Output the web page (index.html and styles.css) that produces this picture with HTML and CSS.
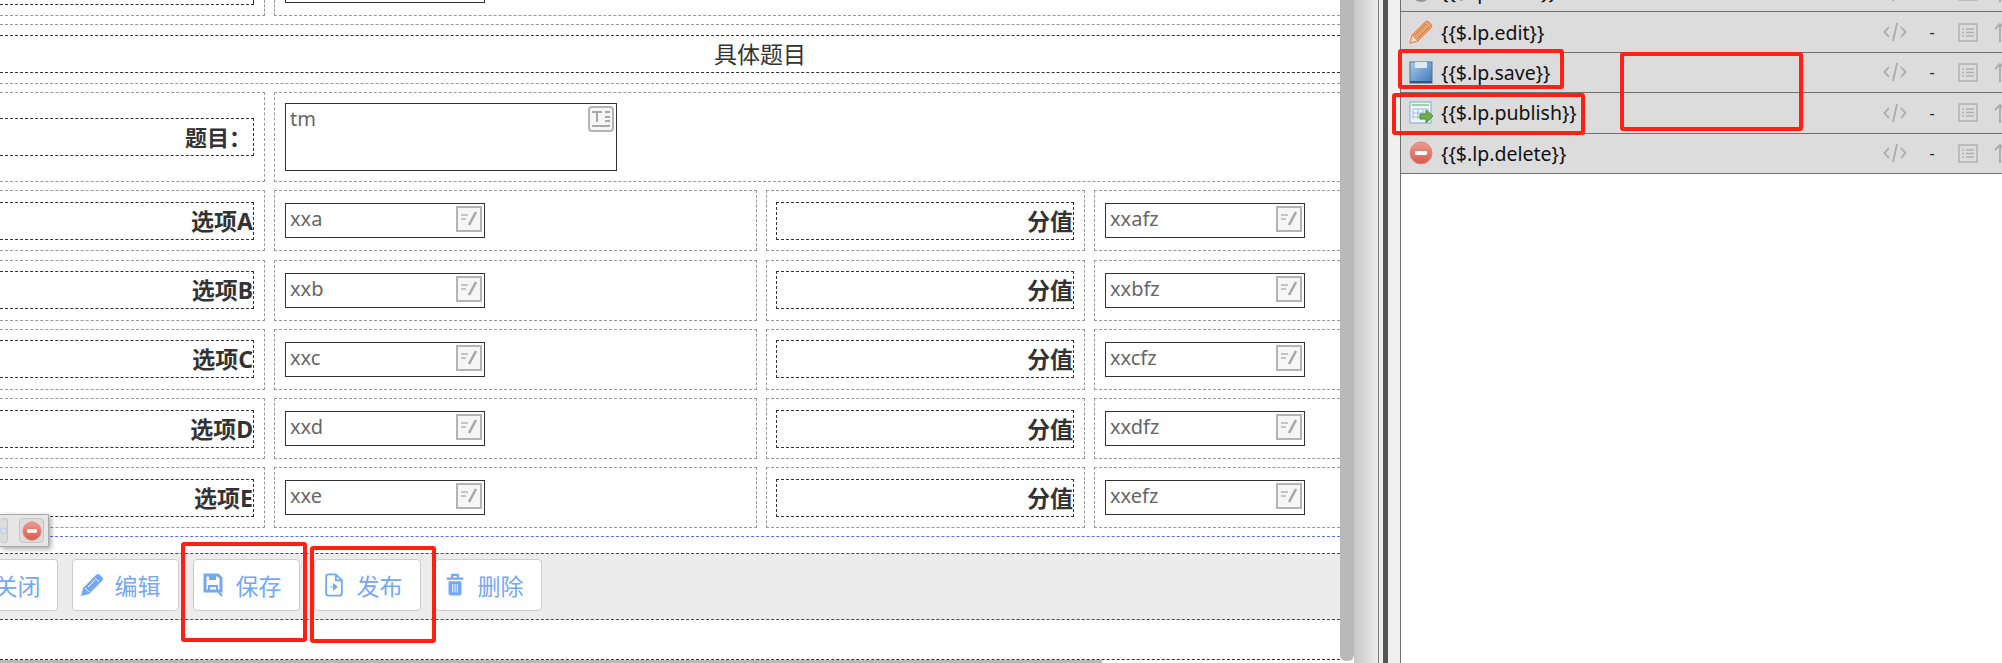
FILE: index.html
```html
<!DOCTYPE html>
<html lang="zh-CN">
  <head>
    <meta charset="UTF-8">
    <title>表单设计</title>
    <link rel="stylesheet" href="styles.css">
  </head>
  <body>
    <svg class="defs" width="0" height="0">
      <defs>
        <symbol id="i-input" viewBox="0 0 26 26">
          <rect x="1" y="1" width="24" height="24" fill="#f6f6f6" stroke="#b4b4b4" stroke-width="2"/>
          <path d="M5 9h7M5 13h5" stroke="#c4c4c4" stroke-width="2"/>
          <path d="M20 6l-7 13" stroke="#a8a8a8" stroke-width="2.6"/>
        </symbol>
        <symbol id="i-text" viewBox="0 0 26 26">
          <rect x="1" y="1" width="24" height="24" rx="3" fill="#f6f6f6" stroke="#b4b4b4" stroke-width="2"/>
          <path d="M4 6h10M9 6v10M17 6h5M17 11h5M17 15h5" stroke="#a8a8a8" stroke-width="2"/>
          <path d="M4 20h18" stroke="#a8a8a8" stroke-width="2"/>
        </symbol>
        <symbol id="i-code" viewBox="0 0 24 20">
          <path d="M6 5L1.500 10L6 15M18 5L22.500 10L18 15M14 1L10 19" fill="none" stroke="#ababab" stroke-width="1.800"/>
        </symbol>
        <symbol id="i-list" viewBox="0 0 20 19">
          <rect x="1" y="1" width="18" height="17" fill="none" stroke="#b0b0b0" stroke-width="1.500"/>
          <path d="M4 6h2M8 6h8M4 9.500h2M8 9.500h8M4 13h2M8 13h8" stroke="#b0b0b0" stroke-width="1.300"/>
        </symbol>
        <symbol id="i-up" viewBox="0 0 12 20">
          <path d="M6 20V2M1 7L6 2L11 7" fill="none" stroke="#ababab" stroke-width="1.800"/>
        </symbol>
        <symbol id="i-minus" viewBox="0 0 24 24">
          <circle cx="12" cy="12" r="11" fill="url(#g-red)" stroke="#d98a80"/>
          <rect x="6" y="10" width="12" height="4" rx="1" fill="#fff"/>
        </symbol>
        <symbol id="b-pencil" viewBox="0 0 24 24">
          <path d="M1 23l2-8L16 2q2-2 4 0l2 2q2 2 0 4L9 21z" fill="currentColor"/>
          <path d="M5 15l4 4M15 5l4 4M8 14l7-7" stroke="#fff" stroke-width="1"/>
        </symbol>
        <symbol id="b-save" viewBox="0 0 20 24">
          <path d="M2 2h13l3 3v13H2z" fill="none" stroke="currentColor" stroke-width="3"/>
          <rect x="6" y="2" width="7" height="5" fill="currentColor"/>
          <path d="M6 18v-5h8v5M14 17l5 6" fill="none" stroke="currentColor" stroke-width="2"/>
        </symbol>
        <symbol id="b-file" viewBox="0 0 20 26">
          <path d="M4 1.500h8l6.500 6.500v14q0 2.500-2.500 2.500H4Q1.500 24.500 1.500 22V4Q1.500 1.500 4 1.500zM12 1.500V8h6.500" fill="none" stroke="currentColor" stroke-width="2"/>
          <path d="M6 15h5M9.500 11.500l4 3.500-4 3.500z" fill="currentColor" stroke="currentColor" stroke-width="1"/>
        </symbol>
        <symbol id="b-trash" viewBox="0 0 20 26">
          <path d="M1 6h18M7 5V2h6v3" fill="none" stroke="currentColor" stroke-width="2.400"/>
          <path d="M3 9h14v13q0 2.500-2.500 2.500h-9Q3 24.500 3 22z" fill="currentColor"/>
          <path d="M7.500 12v9M10 12v9M12.500 12v9" stroke="#fff" stroke-width="1"/>
        </symbol>
        <linearGradient id="g-red" x1="0" y1="0" x2="0" y2="1">
          <stop offset="0" stop-color="#ee9a90"/>
          <stop offset="1" stop-color="#d9594c"/>
        </linearGradient>
        <linearGradient id="g-blue" x1="0" y1="0" x2="1" y2="1">
          <stop offset="0" stop-color="#a9cbec"/>
          <stop offset="1" stop-color="#3f78b8"/>
        </linearGradient>
      </defs>
    </svg>

    <div class="editor">
      <div class="row row-top">
        <div class="cell cell-label cell-first"><div class="label label-cut"></div></div>
        <div class="cell cell-wide"><div class="input-cut"></div></div>
      </div>

      <div class="title-wrap">
        <div class="title">具体题目</div>
      </div>

      <div class="rows">
        <div class="row row-tall">
          <div class="cell cell-label cell-first"><div class="label label-colon">题目：</div></div>
          <div class="cell cell-wide cell-top">
            <div class="input input-area">tm<svg class="input-icon"><use href="#i-text"/></svg></div>
          </div>
        </div>

        <div class="row">
          <div class="cell cell-label cell-first"><div class="label">选项A</div></div>
          <div class="cell cell-mid"><div class="input">xxa<svg class="input-icon"><use href="#i-input"/></svg></div></div>
          <div class="cell cell-label cell-third"><div class="label label-box">分值</div></div>
          <div class="cell cell-last"><div class="input">xxafz<svg class="input-icon"><use href="#i-input"/></svg></div></div>
        </div>
        <div class="row">
          <div class="cell cell-label cell-first"><div class="label">选项B</div></div>
          <div class="cell cell-mid"><div class="input">xxb<svg class="input-icon"><use href="#i-input"/></svg></div></div>
          <div class="cell cell-label cell-third"><div class="label label-box">分值</div></div>
          <div class="cell cell-last"><div class="input">xxbfz<svg class="input-icon"><use href="#i-input"/></svg></div></div>
        </div>
        <div class="row">
          <div class="cell cell-label cell-first"><div class="label">选项C</div></div>
          <div class="cell cell-mid"><div class="input">xxc<svg class="input-icon"><use href="#i-input"/></svg></div></div>
          <div class="cell cell-label cell-third"><div class="label label-box">分值</div></div>
          <div class="cell cell-last"><div class="input">xxcfz<svg class="input-icon"><use href="#i-input"/></svg></div></div>
        </div>
        <div class="row">
          <div class="cell cell-label cell-first"><div class="label">选项D</div></div>
          <div class="cell cell-mid"><div class="input">xxd<svg class="input-icon"><use href="#i-input"/></svg></div></div>
          <div class="cell cell-label cell-third"><div class="label label-box">分值</div></div>
          <div class="cell cell-last"><div class="input">xxdfz<svg class="input-icon"><use href="#i-input"/></svg></div></div>
        </div>
        <div class="row">
          <div class="cell cell-label cell-first"><div class="label">选项E</div></div>
          <div class="cell cell-mid"><div class="input">xxe<svg class="input-icon"><use href="#i-input"/></svg></div></div>
          <div class="cell cell-label cell-third"><div class="label label-box">分值</div></div>
          <div class="cell cell-last"><div class="input">xxefz<svg class="input-icon"><use href="#i-input"/></svg></div></div>
        </div>
      </div>

      <div class="blue-line"></div>

      <div class="toolbar">
        <a class="btn btn-cut">关闭</a>
        <a class="btn"><svg class="btn-icon"><use href="#b-pencil"/></svg>编辑</a>
        <a class="btn"><svg class="btn-icon"><use href="#b-save"/></svg>保存</a>
        <a class="btn"><svg class="btn-icon"><use href="#b-file"/></svg>发布</a>
        <a class="btn"><svg class="btn-icon"><use href="#b-trash"/></svg>删除</a>
      </div>

      <div class="page-end"></div>
      <div class="hbar"></div>

      <!-- floating widget toolbar -->
      <div class="float-tools">
        <span class="float-btn float-btn-doc">
          <svg width="22" height="22" viewBox="0 0 22 22"><rect x="3" y="2" width="16" height="18" rx="2" fill="#cfe0f3" stroke="#7fa4cf"/></svg>
        </span>
        <span class="float-btn"><svg width="20" height="20"><use href="#i-minus"/></svg></span>
      </div>

      <!-- hand drawn marks on the screenshot -->
      <i class="mark mark-save"></i>
      <i class="mark mark-publish"></i>
    </div>

    <div class="vbar"></div>
    <div class="gutter"></div>
    <div class="splitter"><div class="splitter-bar"></div></div>

    <div class="panel">
      <div class="item">
        <div class="item-name">
          <svg class="item-icon" viewBox="0 0 24 24"><circle cx="12" cy="12" r="10" fill="#9a9a9a"/></svg>
          {{$.lp.close}}
        </div>
        <div class="item-tools">
          <svg class="tool-code"><use href="#i-code"/></svg><span class="tool-dash">-</span><svg class="tool-list"><use href="#i-list"/></svg><svg class="tool-up"><use href="#i-up"/></svg>
        </div>
      </div>
      <div class="item">
        <div class="item-name">
          <svg class="item-icon" viewBox="0 0 24 24">
            <path d="M1 23l2-8L16 2q2-2 4 0l2 2q2 2 0 4L9 21z" fill="#e8a070" stroke="#d98850"/>
            <path d="M1 23l2-8 6 6z" fill="#f6dcc4" stroke="#d98850"/>
            <path d="M6 15L17 4M9 18L20 7" stroke="#cf7a3e"/>
          </svg>
          {{$.lp.edit}}
        </div>
        <div class="item-tools">
          <svg class="tool-code"><use href="#i-code"/></svg><span class="tool-dash">-</span><svg class="tool-list"><use href="#i-list"/></svg><svg class="tool-up"><use href="#i-up"/></svg>
        </div>
      </div>
      <div class="item">
        <div class="item-name">
          <svg class="item-icon" viewBox="0 0 24 24">
            <rect x="1" y="2" width="22" height="21" fill="url(#g-blue)" stroke="#4a6f98"/>
            <rect x="6" y="2" width="12" height="6" fill="#dfeaf6"/>
            <rect x="1" y="21" width="22" height="2" fill="#2f5580"/>
          </svg>
          {{$.lp.save}}
        </div>
        <div class="item-tools">
          <svg class="tool-code"><use href="#i-code"/></svg><span class="tool-dash">-</span><svg class="tool-list"><use href="#i-list"/></svg><svg class="tool-up"><use href="#i-up"/></svg>
        </div>
      </div>
      <div class="item">
        <div class="item-name">
          <svg class="item-icon" viewBox="0 0 24 24">
            <rect x="1" y="1" width="21" height="21" fill="#eef4fb" stroke="#7ea6d6"/>
            <path d="M3 4h17" stroke="#8ec07a" stroke-width="1.500"/>
            <path d="M4 8h15v12M4 8v10M4 12h12M4 16h8M9 8v10M14 8v6" fill="none" stroke="#9dbde0"/>
            <path d="M11 13h6V9l7 6-7 7v-4h-6z" fill="#6fb04a" stroke="#4d8c2f"/>
          </svg>
          {{$.lp.publish}}
        </div>
        <div class="item-tools">
          <svg class="tool-code"><use href="#i-code"/></svg><span class="tool-dash">-</span><svg class="tool-list"><use href="#i-list"/></svg><svg class="tool-up"><use href="#i-up"/></svg>
        </div>
      </div>
      <div class="item">
        <div class="item-name">
          <svg class="item-icon"><use href="#i-minus"/></svg>
          {{$.lp.delete}}
        </div>
        <div class="item-tools">
          <svg class="tool-code"><use href="#i-code"/></svg><span class="tool-dash">-</span><svg class="tool-list"><use href="#i-list"/></svg><svg class="tool-up"><use href="#i-up"/></svg>
        </div>
      </div>

      <i class="mark mark-item-save"></i>
      <i class="mark mark-item-publish"></i>
      <i class="mark mark-item-empty"></i>
    </div>
  </body>
</html>
```

FILE: styles.css
```css
html, body { margin: 0; padding: 0; }
body { display: flex; width: 2002px; height: 663px; overflow: hidden; background: #fff; color: #333; font-family: "Noto Sans", "Noto Sans CJK SC", sans-serif; }
.defs { position: absolute; }

/* form area */
.editor { position: relative; flex: none; width: 1340px; height: 663px; overflow: hidden; }
.row { display: flex; gap: 9px; height: 61px; }
.row-top { height: 16px; }
.row-tall { height: 90px; }
.rows { display: flex; flex-direction: column; gap: 8.3px; margin-top: 8px; }
.cell { box-sizing: border-box; border: 1px dashed #999; }
.cell-label { display: flex; align-items: center; }
.cell-first { flex: none; width: 265px; border-left: 0; padding-right: 10px; }
.cell-wide { flex: 1; border-right: 0; padding-left: 10px; }
.cell-top { padding-top: 10px; }
.cell-mid { flex: none; width: 483px; padding: 12px 0 0 10px; }
.cell-third { flex: none; width: 319px; padding: 0 10px 0 9px; }
.cell-last { flex: 1; border-right: 0; padding: 12px 0 0 10px; }
.row-top .cell { border-top: 0; }

.label { box-sizing: border-box; flex: 1; height: 38px; border: 1px dashed #333; border-left: 0; font-size: 23px; font-weight: 700; line-height: 36px; text-align: right; white-space: nowrap; }
.label-box { border-left: 1px dashed #333; }
.label-cut { height: 5px; border-top: 0; align-self: flex-start; }
.label-colon { padding-right: 2px; font-size: 22px; }

.input { box-sizing: border-box; position: relative; width: 200px; height: 35px; padding-left: 4px; border: 1px solid #333; background: #fff; color: #666; font-size: 20px; line-height: 30px; }
.input-area { width: 332px; height: 68px; }
.input-cut { box-sizing: border-box; width: 200px; height: 3px; border: 1px solid #333; border-top: 0; }
.input-icon { position: absolute; top: 2px; right: 2px; width: 26px; height: 26px; }

.title-wrap { box-sizing: border-box; height: 60px; margin-top: 8px; padding: 10px 0; border-top: 1px dashed #999; border-bottom: 1px dashed #999; }
.title { box-sizing: border-box; height: 38px; padding-left: 180px; border-top: 1px dashed #333; border-bottom: 1px dashed #333; font-size: 23px; line-height: 36px; text-align: center; }

.blue-line { height: 16px; margin-top: 8px; border-top: 1px dashed #5b6ee8; }

/* buttons */
.toolbar { box-sizing: border-box; display: flex; gap: 14px; height: 67px; padding-top: 5px; background: #ececec; border-top: 1px dashed #f00; border-bottom: 1px dashed #f00; }
.btn { box-sizing: border-box; display: flex; align-items: center; flex: none; width: 107px; height: 52px; padding-left: 4px; background: #fff; border: 1px solid #ccc; border-radius: 4px; color: #74a7f6; font-size: 23px; white-space: nowrap; }
.btn-cut { justify-content: flex-end; width: 57.5px; padding: 0 16px 0 0; border-left: 0; border-radius: 0 4px 4px 0; }
.btn-icon { flex: none; width: 30px; height: 24px; margin-right: 8px; }

.page-end { margin-top: 39px; border-top: 1px dashed #333; }
.hbar { width: 1102px; height: 3px; background: #b9b9b9; }

.float-tools { position: absolute; left: 0; top: 514px; display: flex; align-items: center; gap: 11px; box-sizing: border-box; width: 49px; height: 33px; background: #e6e6e6; border: 1px solid #aaa; border-left: 0; box-shadow: 2px 2px 5px rgba(0, 0, 0, 0.35); }
.float-btn { display: flex; align-items: center; justify-content: center; flex: none; box-sizing: border-box; width: 25px; height: 25px; background: #ddd; border: 1px solid #c4c4c4; border-radius: 4px; }
.float-btn-doc { width: 8px; justify-content: flex-end; overflow: hidden; border-left: 0; }

.mark { position: absolute; box-sizing: border-box; border: 4px solid #ff2014; border-radius: 3px; }
.mark-save { left: 181px; top: 542px; width: 126px; height: 100px; }
.mark-publish { left: 310px; top: 546px; width: 126px; height: 97px; }

/* scroll bar and splitter */
.vbar { flex: none; width: 14px; height: 661px; background: #b9b9b9; border-radius: 0 0 6px 6px; }
.gutter { flex: none; width: 24px; background: linear-gradient(to right, #c8c8c8, #ececec); }
.splitter { box-sizing: border-box; flex: none; width: 22px; padding-left: 4px; background: #f0f0f0; border-left: 1px solid #777; }
.splitter-bar { width: 5px; height: 100%; background: #555; }

/* right panel */
.panel { position: relative; flex: none; width: 602px; margin-top: -28px; border-left: 1px solid #707070; box-sizing: border-box; }
.item { box-sizing: border-box; display: flex; align-items: center; width: 640px; height: 40.4px; padding-left: 8px; background: #dcdcdc; border-bottom: 1px solid #707070; }
.item-name { display: flex; align-items: center; gap: 8px; flex: none; width: 474px; color: #111; font-size: 19.5px; }
.item-icon { flex: none; width: 24px; height: 24px; }
.item-tools { display: flex; align-items: center; }
.tool-code { width: 24px; height: 20px; }
.tool-dash { width: 6px; margin: 0 23px 0 22px; color: #222; font-size: 16px; line-height: 20px; text-align: center; }
.tool-list { width: 20px; height: 19px; }
.tool-up { width: 12px; height: 20px; margin-left: 16px; }

.mark-item-save { left: -3px; top: 77px; width: 166px; height: 40px; }
.mark-item-publish { left: -9px; top: 121px; width: 193px; height: 42px; }
.mark-item-empty { left: 219px; top: 80px; width: 183px; height: 79px; }
```
